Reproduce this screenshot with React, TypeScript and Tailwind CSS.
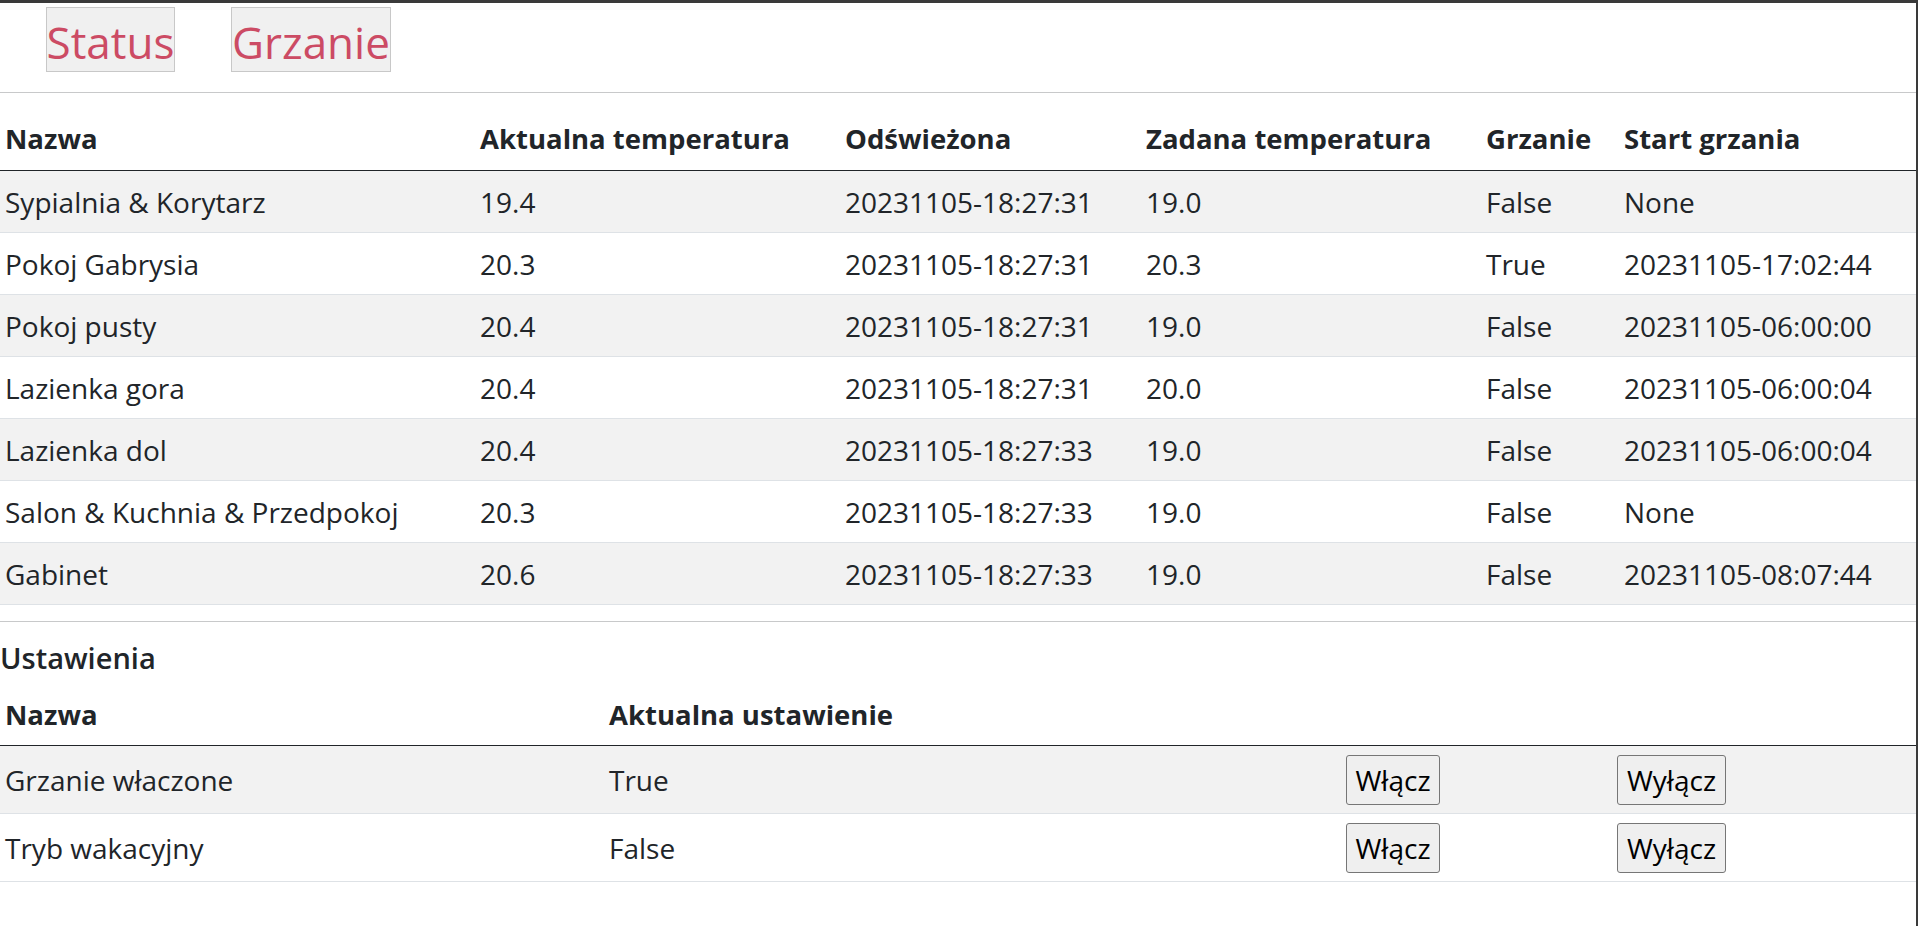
import React from "react";

type Room = {
  name: string;
  current: string;
  refreshed: string;
  target: string;
  heating: string;
  started: string;
};

type Setting = {
  name: string;
  value: string;
};

const ROOMS: Room[] = [
  { name: "Sypialnia & Korytarz", current: "19.4", refreshed: "20231105-18:27:31", target: "19.0", heating: "False", started: "None" },
  { name: "Pokoj Gabrysia", current: "20.3", refreshed: "20231105-18:27:31", target: "20.3", heating: "True", started: "20231105-17:02:44" },
  { name: "Pokoj pusty", current: "20.4", refreshed: "20231105-18:27:31", target: "19.0", heating: "False", started: "20231105-06:00:00" },
  { name: "Lazienka gora", current: "20.4", refreshed: "20231105-18:27:31", target: "20.0", heating: "False", started: "20231105-06:00:04" },
  { name: "Lazienka dol", current: "20.4", refreshed: "20231105-18:27:33", target: "19.0", heating: "False", started: "20231105-06:00:04" },
  { name: "Salon & Kuchnia & Przedpokoj", current: "20.3", refreshed: "20231105-18:27:33", target: "19.0", heating: "False", started: "None" },
  { name: "Gabinet", current: "20.6", refreshed: "20231105-18:27:33", target: "19.0", heating: "False", started: "20231105-08:07:44" },
];

const SETTINGS: Setting[] = [
  { name: "Grzanie właczone", value: "True" },
  { name: "Tryb wakacyjny", value: "False" },
];

// column widths measured off the status page
const ROOM_COLS = "grid grid-cols-[475px_365px_301px_340px_138px_1fr]";
const SETTING_COLS = "grid grid-cols-[604px_737px_271px_1fr]";

function NavTab({ label, width }: { label: string; width: string }) {
  return (
    <a
      href="#"
      className={`${width} flex h-[65px] items-center justify-center border border-[#c8c8c8] bg-[#f0f0f0] pt-[4px] text-[44px] leading-none text-[#cc4b64]`}
    >
      {label}
    </a>
  );
}

function ToggleButton({ label, width }: { label: string; width: string }) {
  return (
    <button
      type="button"
      className={`${width} h-[50px] rounded-[3px] border border-[#767676] bg-[#efefef] text-[28px] leading-none text-black`}
    >
      {label}
    </button>
  );
}

export default function App() {
  return (
    <div className="min-h-[926px] border-t-[3px] border-r-2 border-[#3a3a3a] bg-white font-['Open_Sans',sans-serif] text-[28px] text-[#212529]">
      {/* Top tabs */}
      <nav className="flex gap-[56px] pl-[46px] pt-[4px]">
        <NavTab label="Status" width="w-[129px]" />
        <NavTab label="Grzanie" width="w-[160px]" />
      </nav>

      <hr className="mt-[20px] border-t border-[#c8c9ca]" />

      {/* Rooms table */}
      <div className="mt-[15px]">
        <div className={`${ROOM_COLS} h-[63px] items-center border-b border-[#212529] text-[27.5px] font-bold`}>
          <div className="pl-[5px]">Nazwa</div>
          <div className="pl-[5px]">Aktualna temperatura</div>
          <div className="pl-[5px]">Odświeżona</div>
          <div className="pl-[5px]">Zadana temperatura</div>
          <div className="pl-[5px]">Grzanie</div>
          <div className="pl-[5px]">Start grzania</div>
        </div>
        {ROOMS.map((r, i) => (
          <div
            key={r.name}
            className={`${ROOM_COLS} h-[62px] items-center border-b border-[#dee2e6] ${i % 2 === 0 ? "bg-[#f2f2f2]" : "bg-white"}`}
          >
            <div className="pl-[5px] whitespace-nowrap">{r.name}</div>
            <div className="pl-[5px]">{r.current}</div>
            <div className="pl-[5px]">{r.refreshed}</div>
            <div className="pl-[5px]">{r.target}</div>
            <div className="pl-[5px]">{r.heating}</div>
            <div className="pl-[5px] whitespace-nowrap">{r.started}</div>
          </div>
        ))}
      </div>

      <hr className="mt-[16px] border-t border-[#c8c9ca]" />

      {/* Settings */}
      <h4 className="mt-[18px] text-[29px] leading-[36px] font-semibold">Ustawienia</h4>

      <div className="mt-[8px]">
        <div className={`${SETTING_COLS} h-[62px] items-center border-b border-[#212529] text-[27.5px] font-bold`}>
          <div className="pl-[5px]">Nazwa</div>
          <div className="pl-[5px]">Aktualna ustawienie</div>
          <div />
          <div />
        </div>
        {SETTINGS.map((s, i) => (
          <div
            key={s.name}
            className={`${SETTING_COLS} h-[68px] items-center border-b border-[#dee2e6] ${i % 2 === 0 ? "bg-[#f2f2f2]" : "bg-white"}`}
          >
            <div className="pl-[5px]">{s.name}</div>
            <div className="pl-[5px]">{s.value}</div>
            <div className="pl-[5px]">
              <ToggleButton label="Włącz" width="w-[94px]" />
            </div>
            <div className="pl-[5px]">
              <ToggleButton label="Wyłącz" width="w-[109px]" />
            </div>
          </div>
        ))}
      </div>
    </div>
  );
}
